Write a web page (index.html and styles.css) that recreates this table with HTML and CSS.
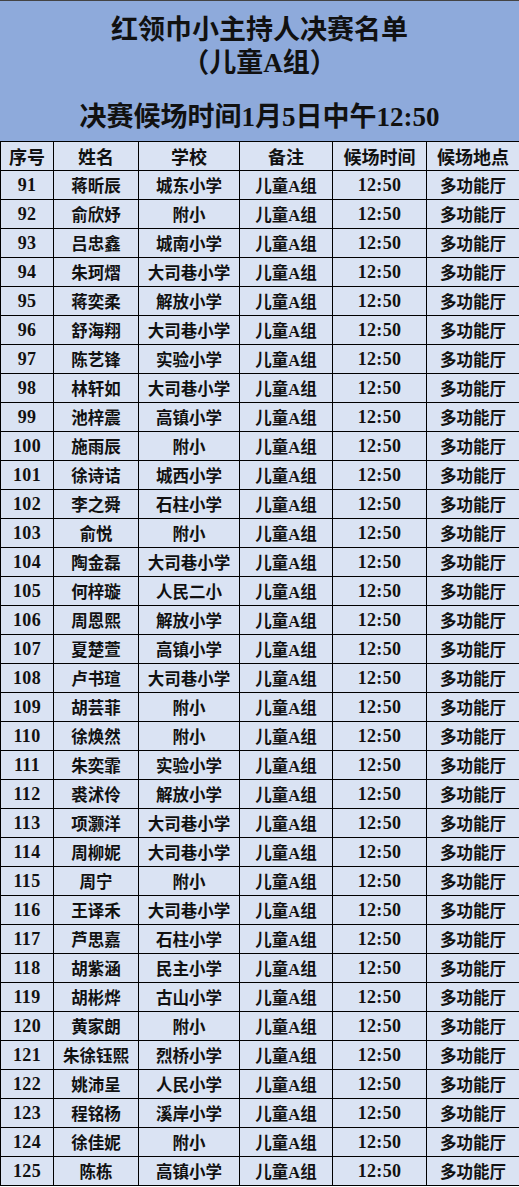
FILE: index.html
```html
<!DOCTYPE html>
<html lang="zh">
<head>
<meta charset="utf-8">
<link rel="stylesheet" href="styles.css">
</head>
<body>
<div class="page">
  <header class="banner">
    <div class="title">红领巾小主持人决赛名单</div>
    <div class="title">（儿童A组）</div>
    <div class="subtitle">决赛候场时间1月5日中午12:50</div>
  </header>
  <table class="list">
    <colgroup>
      <col class="c1"><col class="c2"><col class="c3"><col class="c4"><col class="c5"><col class="c6">
    </colgroup>
    <thead>
      <tr><th>序号</th><th>姓名</th><th>学校</th><th>备注</th><th>候场时间</th><th>候场地点</th></tr>
    </thead>
    <tbody id="rows">
      <tr><td class="num">91</td><td>蒋昕辰</td><td>城东小学</td><td>儿童A组</td><td class="num">12:50</td><td>多功能厅</td></tr>
      <tr><td class="num">92</td><td>俞欣妤</td><td>附小</td><td>儿童A组</td><td class="num">12:50</td><td>多功能厅</td></tr>
      <tr><td class="num">93</td><td>吕忠鑫</td><td>城南小学</td><td>儿童A组</td><td class="num">12:50</td><td>多功能厅</td></tr>
      <tr><td class="num">94</td><td>朱珂熠</td><td>大司巷小学</td><td>儿童A组</td><td class="num">12:50</td><td>多功能厅</td></tr>
      <tr><td class="num">95</td><td>蒋奕柔</td><td>解放小学</td><td>儿童A组</td><td class="num">12:50</td><td>多功能厅</td></tr>
      <tr><td class="num">96</td><td>舒海翔</td><td>大司巷小学</td><td>儿童A组</td><td class="num">12:50</td><td>多功能厅</td></tr>
      <tr><td class="num">97</td><td>陈艺锋</td><td>实验小学</td><td>儿童A组</td><td class="num">12:50</td><td>多功能厅</td></tr>
      <tr><td class="num">98</td><td>林轩如</td><td>大司巷小学</td><td>儿童A组</td><td class="num">12:50</td><td>多功能厅</td></tr>
      <tr><td class="num">99</td><td>池梓震</td><td>高镇小学</td><td>儿童A组</td><td class="num">12:50</td><td>多功能厅</td></tr>
      <tr><td class="num">100</td><td>施雨辰</td><td>附小</td><td>儿童A组</td><td class="num">12:50</td><td>多功能厅</td></tr>
      <tr><td class="num">101</td><td>徐诗诘</td><td>城西小学</td><td>儿童A组</td><td class="num">12:50</td><td>多功能厅</td></tr>
      <tr><td class="num">102</td><td>李之舜</td><td>石柱小学</td><td>儿童A组</td><td class="num">12:50</td><td>多功能厅</td></tr>
      <tr><td class="num">103</td><td>俞悦</td><td>附小</td><td>儿童A组</td><td class="num">12:50</td><td>多功能厅</td></tr>
      <tr><td class="num">104</td><td>陶金磊</td><td>大司巷小学</td><td>儿童A组</td><td class="num">12:50</td><td>多功能厅</td></tr>
      <tr><td class="num">105</td><td>何梓璇</td><td>人民二小</td><td>儿童A组</td><td class="num">12:50</td><td>多功能厅</td></tr>
      <tr><td class="num">106</td><td>周恩熙</td><td>解放小学</td><td>儿童A组</td><td class="num">12:50</td><td>多功能厅</td></tr>
      <tr><td class="num">107</td><td>夏楚萱</td><td>高镇小学</td><td>儿童A组</td><td class="num">12:50</td><td>多功能厅</td></tr>
      <tr><td class="num">108</td><td>卢书瑄</td><td>大司巷小学</td><td>儿童A组</td><td class="num">12:50</td><td>多功能厅</td></tr>
      <tr><td class="num">109</td><td>胡芸菲</td><td>附小</td><td>儿童A组</td><td class="num">12:50</td><td>多功能厅</td></tr>
      <tr><td class="num">110</td><td>徐焕然</td><td>附小</td><td>儿童A组</td><td class="num">12:50</td><td>多功能厅</td></tr>
      <tr><td class="num">111</td><td>朱奕霏</td><td>实验小学</td><td>儿童A组</td><td class="num">12:50</td><td>多功能厅</td></tr>
      <tr><td class="num">112</td><td>裘沭伶</td><td>解放小学</td><td>儿童A组</td><td class="num">12:50</td><td>多功能厅</td></tr>
      <tr><td class="num">113</td><td>项灏洋</td><td>大司巷小学</td><td>儿童A组</td><td class="num">12:50</td><td>多功能厅</td></tr>
      <tr><td class="num">114</td><td>周柳妮</td><td>大司巷小学</td><td>儿童A组</td><td class="num">12:50</td><td>多功能厅</td></tr>
      <tr><td class="num">115</td><td>周宁</td><td>附小</td><td>儿童A组</td><td class="num">12:50</td><td>多功能厅</td></tr>
      <tr><td class="num">116</td><td>王译禾</td><td>大司巷小学</td><td>儿童A组</td><td class="num">12:50</td><td>多功能厅</td></tr>
      <tr><td class="num">117</td><td>芦思嘉</td><td>石柱小学</td><td>儿童A组</td><td class="num">12:50</td><td>多功能厅</td></tr>
      <tr><td class="num">118</td><td>胡紫涵</td><td>民主小学</td><td>儿童A组</td><td class="num">12:50</td><td>多功能厅</td></tr>
      <tr><td class="num">119</td><td>胡彬烨</td><td>古山小学</td><td>儿童A组</td><td class="num">12:50</td><td>多功能厅</td></tr>
      <tr><td class="num">120</td><td>黄家朗</td><td>附小</td><td>儿童A组</td><td class="num">12:50</td><td>多功能厅</td></tr>
      <tr><td class="num">121</td><td>朱徐钰熙</td><td>烈桥小学</td><td>儿童A组</td><td class="num">12:50</td><td>多功能厅</td></tr>
      <tr><td class="num">122</td><td>姚沛呈</td><td>人民小学</td><td>儿童A组</td><td class="num">12:50</td><td>多功能厅</td></tr>
      <tr><td class="num">123</td><td>程铭杨</td><td>溪岸小学</td><td>儿童A组</td><td class="num">12:50</td><td>多功能厅</td></tr>
      <tr><td class="num">124</td><td>徐佳妮</td><td>附小</td><td>儿童A组</td><td class="num">12:50</td><td>多功能厅</td></tr>
      <tr><td class="num">125</td><td>陈栋</td><td>高镇小学</td><td>儿童A组</td><td class="num">12:50</td><td>多功能厅</td></tr>
    </tbody>
  </table>
</div>
</body>
</html>
```
FILE: styles.css
```css
html, body {
  margin: 0;
  padding: 0;
  background: #ffffff;
}
.page {
  width: 519px;
  font-family: "Liberation Serif", "Noto Sans CJK SC", serif;
  color: #111111;
}
.banner {
  height: 141px;
  box-sizing: border-box;
  background: #8eaadb;
  border-top: 1px solid #444444;
  display: flex;
  flex-direction: column;
  align-items: center;
  padding-top: 13px;
  font-weight: bold;
}
.title {
  font-size: 27px;
  line-height: 33px;
}
.subtitle {
  font-size: 27px;
  line-height: 33px;
  margin-top: 21px;
}
.list {
  width: 519px;
  table-layout: fixed;
  border-collapse: collapse;
  background: #dae3f3;
}
.c1 { width: 53px; }
.c2 { width: 85px; }
.c3 { width: 101px; }
.c4 { width: 93px; }
.c5 { width: 94px; }
.c6 { width: 93px; }
.list th, .list td {
  border: 1px solid #000000;
  height: 28px;
  padding: 0;
  text-align: center;
  font-weight: bold;
  white-space: nowrap;
  overflow: hidden;
}
.list th {
  font-size: 18px;
}
.list td {
  font-size: 16.5px;
}
.list td.num {
  font-size: 18px;
  letter-spacing: 0.3px;
}
```
